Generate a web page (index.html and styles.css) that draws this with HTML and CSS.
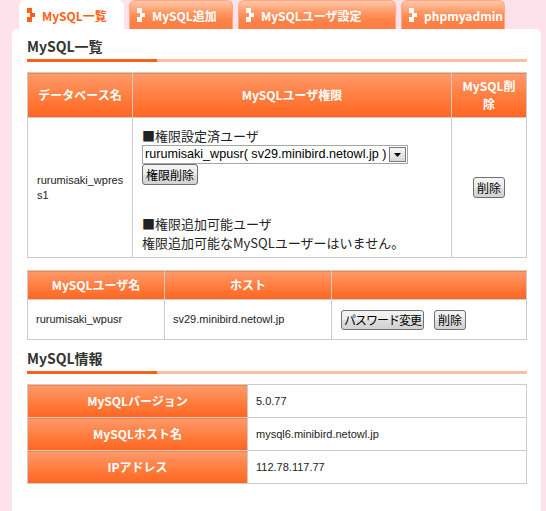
FILE: index.html
```html
<!DOCTYPE html>
<html lang="ja">
<head>
<meta charset="utf-8">
<title>MySQL一覧</title>
<link rel="stylesheet" href="styles.css">
</head>
<body>
<nav class="tabs">
  <a class="tab tab-active tab-w1"><svg class="tab-icon" viewBox="0 0 8 14" width="8" height="14"><rect x="0" y="0" width="5" height="5"/><rect x="3" y="5" width="5" height="4"/><rect x="0" y="9" width="5" height="5"/></svg>MySQL一覧</a>
  <a class="tab tab-w2"><svg class="tab-icon" viewBox="0 0 8 14" width="8" height="14"><rect x="0" y="0" width="5" height="5"/><rect x="3" y="5" width="5" height="4"/><rect x="0" y="9" width="5" height="5"/></svg>MySQL追加</a>
  <a class="tab tab-w3"><svg class="tab-icon" viewBox="0 0 8 14" width="8" height="14"><rect x="0" y="0" width="5" height="5"/><rect x="3" y="5" width="5" height="4"/><rect x="0" y="9" width="5" height="5"/></svg>MySQLユーザ設定</a>
  <a class="tab tab-w4"><svg class="tab-icon" viewBox="0 0 8 14" width="8" height="14"><rect x="0" y="0" width="5" height="5"/><rect x="3" y="5" width="5" height="4"/><rect x="0" y="9" width="5" height="5"/></svg>phpmyadmin</a>
</nav>
<main class="panel">
  <h2 class="heading">MySQL一覧</h2>
  <div class="rule"><span class="rule-dark"></span><span class="rule-light"></span></div>

  <table class="grid grid-db">
    <colgroup><col class="c-db"><col class="c-perm"><col class="c-del"></colgroup>
    <tr class="row-h44">
      <th>データベース名</th>
      <th>MySQLユーザ権限</th>
      <th class="th-two">MySQL削<br>除</th>
    </tr>
    <tr class="row-h140">
      <td class="latin dbname">rurumisaki_wpres<br>s1</td>
      <td class="perm">
        <div class="line">■権限設定済ユーザ</div>
        <div class="select"><span class="select-text">rurumisaki_wpusr( sv29.minibird.netowl.jp )</span><span class="select-arrow"><svg viewBox="0 0 7 4" width="7" height="4"><polygon points="0,0 7,0 3.5,4"/></svg></span></div>
        <button class="btn">権限削除</button>
        <div class="line gap-top">■権限追加可能ユーザ</div>
        <div class="line">権限追加可能なMySQLユーザーはいません。</div>
      </td>
      <td class="center"><button class="btn">削除</button></td>
    </tr>
  </table>

  <table class="grid grid-user">
    <colgroup><col class="c-user"><col class="c-host"><col class="c-act"></colgroup>
    <tr class="row-h29">
      <th>MySQLユーザ名</th>
      <th>ホスト</th>
      <th></th>
    </tr>
    <tr class="row-h40">
      <td class="latin">rurumisaki_wpusr</td>
      <td class="latin">sv29.minibird.netowl.jp</td>
      <td class="actions"><button class="btn btn-tight">パスワード変更</button><button class="btn">削除</button></td>
    </tr>
  </table>

  <h2 class="heading heading-2">MySQL情報</h2>
  <div class="rule"><span class="rule-dark"></span><span class="rule-light"></span></div>

  <table class="grid grid-info">
    <colgroup><col class="c-key"><col class="c-val"></colgroup>
    <tr class="row-h33"><th>MySQLバージョン</th><td class="latin">5.0.77</td></tr>
    <tr class="row-h33"><th>MySQLホスト名</th><td class="latin">mysql6.minibird.netowl.jp</td></tr>
    <tr class="row-h33"><th>IPアドレス</th><td class="latin">112.78.117.77</td></tr>
  </table>
</main>
</body>
</html>
```

FILE: styles.css
```css
html, body {
  margin: 0;
  padding: 0;
}
body {
  background: #fde2ec;
  font-family: "Noto Sans CJK JP", "Noto Sans", sans-serif;
  color: #333;
  overflow: hidden;
}

/* tabs */
.tabs {
  display: flex;
  gap: 5px;
  height: 29px;
  padding-left: 19px;
}
.tab {
  display: flex;
  align-items: center;
  box-sizing: border-box;
  height: 29px;
  padding-left: 7px;
  border-radius: 6px 6px 0 0;
  font-size: 12px;
  font-weight: bold;
  color: #fff;
  background: linear-gradient(to bottom, #ffc6a9 0%, #ff9a66 40%, #ff8248 70%, #ff7c42 100%);
  border: 1px solid #ffa882;
  border-bottom: none;
  white-space: nowrap;
}
.tab-icon {
  fill: #fff;
  margin-right: 7px;
  flex: none;
}
.tab-active {
  background: #fff;
  border-color: #fff;
  color: #ff5f14;
}
.tab-active .tab-icon {
  fill: #ff5f14;
}
.tab-w1 { width: 105px; }
.tab-w2 { width: 104px; }
.tab-w3 { width: 158px; }
.tab-w4 { width: 104px; }

/* panel */
.panel {
  box-sizing: border-box;
  width: 529px;
  margin-left: 12px;
  min-height: calc(100vh - 29px);
  background: #fff;
  border-radius: 5px 5px 0 0;
  padding: 8px 14px 20px 15px;
}
.heading {
  margin: 0;
  font-size: 14px;
  line-height: 18px;
  font-weight: bold;
  color: #333;
}
.heading-2 {
  margin-top: 9px;
}
.rule {
  display: flex;
  height: 3px;
  margin-top: 4px;
  width: 500px;
}
.rule-dark {
  width: 130px;
  background: #fb5e19;
}
.rule-light {
  flex: 1;
  background: #fdc0a3;
}

/* tables */
.grid {
  width: 499px;
  border-collapse: collapse;
  table-layout: fixed;
  margin-top: 10px;
}
.grid-user {
  margin-top: 12px;
}
.grid th, .grid td {
  border: 1px solid #cccccc;
  padding: 0 8px;
  vertical-align: middle;
}
.grid th {
  background: linear-gradient(to bottom, #ff9a6b 0%, #ff7f41 50%, #ff6520 100%);
  color: #fff;
  font-size: 12px;
  font-weight: bold;
  line-height: 16px;
  text-align: center;
}
.grid th.th-two {
  line-height: 18px;
}
.grid td {
  font-size: 13px;
  color: #222;
}
.c-db { width: 105px; }
.c-perm { width: 319px; }
.c-del { width: 75px; }
.c-user { width: 137px; }
.c-host { width: 167px; }
.c-act { width: 195px; }
.c-key { width: 220px; }
.c-val { width: 279px; }

.row-h44 { height: 45px; }
.row-h140 { height: 140px; }
.row-h29 { height: 29px; }
.row-h40 { height: 40px; }
.row-h33 { height: 33px; }

.latin {
  font-family: "Liberation Sans", Arial, sans-serif;
}
.grid td.latin {
  font-size: 11px;
  line-height: 15px;
}
.grid td.dbname {
  padding-left: 9px;
}
.grid td.perm {
  padding: 7px 9px 4px 9px;
}
.line {
  font-size: 13px;
  line-height: 19px;
  white-space: nowrap;
}
.gap-top {
  margin-top: 29px;
}
.center {
  text-align: center;
}

/* select */
.select {
  display: flex;
  width: 266px;
  height: 19px;
  box-sizing: border-box;
  border: 1px solid #a5a5a5;
  background: #fff;
}
.select-text {
  flex: 1;
  padding-left: 2px;
  font-family: "Liberation Sans", Arial, sans-serif;
  font-size: 12.6px;
  line-height: 17px;
  color: #000;
  white-space: nowrap;
  overflow: hidden;
}
.select-arrow {
  display: flex;
  align-items: center;
  justify-content: center;
  box-sizing: border-box;
  width: 17px;
  height: 15px;
  margin: 1px;
  border: 1px solid #7a7a7a;
  background: linear-gradient(to bottom, #f6f6f6, #d8d8d8);
}
.select-arrow svg {
  fill: #000;
}

/* buttons */
.btn {
  display: inline-block;
  box-sizing: border-box;
  height: 21px;
  margin: 0;
  padding: 0 3px;
  font-family: "Noto Sans CJK JP", sans-serif;
  font-size: 12px;
  line-height: 17px;
  color: #000;
  border: 1px solid #707070;
  border-radius: 3px;
  background: linear-gradient(to bottom, #f4f4f4 0%, #ececec 50%, #dedede 51%, #d2d2d2 100%);
}
.btn-tight {
  letter-spacing: -1px;
  padding: 0 2px;
}
.actions {
  white-space: nowrap;
}
.actions .btn {
  height: 20px;
  line-height: 16px;
  margin: 0 10px 0 0;
}
.grid td.actions {
  padding-left: 9px;
}
.grid-info td.latin {
  padding-left: 8px;
}
```
